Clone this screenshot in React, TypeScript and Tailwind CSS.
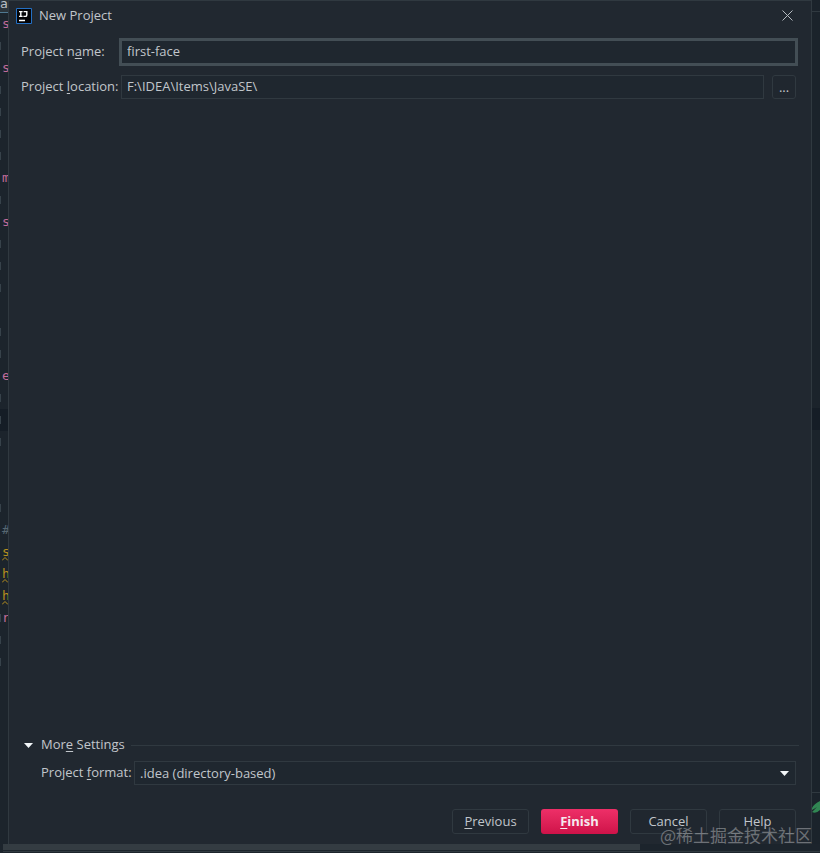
import type { ReactNode } from "react";

type CodeLine = { text: string; tone: string; wavy?: boolean; guide?: boolean };

const blank: CodeLine = { text: "", tone: "", guide: true };
const pink = "text-[#c26c9a]";
const amber = "text-[#b8901f]";

const codeLines: CodeLine[] = [
  { text: "s", tone: pink },
  blank,
  { text: "s", tone: pink },
  blank,
  blank,
  blank,
  blank,
  { text: "m", tone: pink },
  blank,
  { text: "s", tone: pink },
  blank,
  blank,
  blank,
  { text: "", tone: "" },
  blank,
  blank,
  { text: "e", tone: pink },
  blank,
  blank,
  blank,
  { text: "", tone: "" },
  { text: "", tone: "" },
  blank,
  { text: "#", tone: "text-[#566670]" },
  { text: "s", tone: amber, wavy: true },
  { text: "h", tone: amber, wavy: true },
  { text: "h", tone: amber, wavy: true },
  { text: "r", tone: pink, guide: true },
  blank,
  blank,
];

function Key({ children }: { children: ReactNode }) {
  return <span className="underline decoration-1 underline-offset-2">{children}</span>;
}

function Wave() {
  return (
    <svg className="absolute bottom-0.5 left-0.5 h-1 w-1.5" viewBox="0 0 6 4" fill="none" stroke="#b8901f">
      <path d="M0 3.5 3 .5l3 3" />
    </svg>
  );
}

function EditorEdge() {
  return (
    <div aria-hidden="true" className="w-2 shrink-0 overflow-hidden bg-[#1c242c] font-['DejaVu_Sans_Mono',monospace] text-[13px]">
      <div className="h-[13px] border-b border-[#4f7891] bg-[#2b343b] leading-2 text-[#b8bec4]">a</div>
      {codeLines.map((line, i) => (
        <div key={i} className={`relative flex h-[22px] items-center leading-[22px] ${i === 18 ? "bg-[#151d26]" : ""}`}>
          <span className={`mr-px h-2 w-px shrink-0 ${line.guide ? "bg-[#37424a]" : ""}`} />
          <span className={line.tone}>{line.text}</span>
          {line.wavy && <Wave />}
        </div>
      ))}
    </div>
  );
}

function DownArrow({ className = "" }: { className?: string }) {
  return (
    <svg className={`h-[5px] w-[9px] ${className}`} viewBox="0 0 9 5" fill="#f2f6f8" aria-hidden="true">
      <path d="M0 0h9L4.5 5z" />
    </svg>
  );
}

function ProductIcon() {
  return (
    <svg className="size-4" viewBox="0 0 16 16" fill="none" aria-hidden="true">
      <path fill="#050507" stroke="#2470c4" d="M.5.5h15v15H.5z" />
      <path stroke="#fff" strokeWidth="1.4" d="M3 3.6h3.6M3 8.4h3.6M4.8 3.6v4.8M7.6 3.6h3.2v3.3q0 1.5-1.5 1.5H7.4M3 12.5h6" />
    </svg>
  );
}

const plainButton =
  "h-[25px] w-[77px] rounded-[3px] border border-[#303940] bg-[#20272f] pb-0.5 text-center";

export default function App() {
  return (
    <div className="relative flex min-h-screen flex-col overflow-hidden bg-[#1c242c] font-['Open_Sans','Noto_Sans',sans-serif] text-[13px] leading-5 text-[#c1c6cb]">
      <div className="flex flex-1">
        <EditorEdge />
        <main className="flex min-w-0 flex-1 flex-col border border-b-0 border-[#303940] bg-[#212830]">
          <header className="flex h-[29px] items-center pl-[7px] pr-[18px]">
            <ProductIcon />
            <h1 className="ml-[7px] flex-1 pb-0.5">New Project</h1>
            <button type="button" aria-label="Close" className="flex size-3 items-center justify-center">
              <svg className="size-[11px]" viewBox="0 0 11 11" stroke="#b5bbc0" fill="none" aria-hidden="true">
                <path d="m.5.5 10 10m0-10-10 10" />
              </svg>
            </button>
          </header>

          <form className="flex flex-1 flex-col pb-2.5" onSubmit={(e) => e.preventDefault()}>
            <div className="mt-2 flex items-center pl-3 pr-[13px]">
              <label htmlFor="name" className="w-[98px] shrink-0 pb-0.5">
                Project n<Key>a</Key>me:
              </label>
              <input
                id="name"
                defaultValue="first-face"
                className="h-7 min-w-0 flex-1 border-3 border-[#434e55] bg-[#1f272f] px-[5px] pb-0.5 outline-none"
              />
            </div>
            <div className="mt-[9px] flex items-center pl-3 pr-[15px]">
              <label htmlFor="location" className="w-[100px] shrink-0 pb-0.5">
                Project <Key>l</Key>ocation:
              </label>
              <input
                id="location"
                defaultValue={"F:\\IDEA\\Items\\JavaSE\\"}
                className="h-6 min-w-0 flex-1 border border-[#303940] bg-[#1f272f] px-[5px] pb-0.5 outline-none"
              />
              <button type="button" aria-label="Browse" className="ml-2 size-6 rounded-[3px] border border-[#303940] bg-[#20272f] text-center">
                ...
              </button>
            </div>

            <section className="mt-auto">
              <div className="flex items-center pl-[15px] pr-3">
                <button type="button" aria-expanded="true" className="flex h-5 shrink-0 items-center">
                  <DownArrow className="mr-2" />
                  <span className="pb-0.5">
                    Mor<Key>e</Key> Settings
                  </span>
                </button>
                <hr className="ml-1.5 flex-1 border-[#303940]" />
              </div>
              <div className="mt-1.5 flex items-center pl-8 pr-[15px]">
                <label htmlFor="format" className="w-[93px] shrink-0 pb-0.5">
                  Project <Key>f</Key>ormat:
                </label>
                <div className="relative min-w-0 flex-1">
                  <select id="format" className="block h-6 w-full appearance-none border border-[#303940] bg-[#1f272f] px-[5px] outline-none">
                    <option>.idea (directory-based)</option>
                  </select>
                  <DownArrow className="pointer-events-none absolute right-[7px] top-2.5" />
                </div>
              </div>
            </section>

            <footer className="mt-6 flex justify-end gap-3 pr-[15px]">
              <button type="button" className={plainButton}>
                <Key>P</Key>revious
              </button>
              <button
                type="submit"
                className="h-[25px] w-[77px] rounded-[3px] bg-linear-to-b from-[#ee2f68] to-[#cf1249] pb-0.5 text-center font-bold text-[#f5e9ee]"
              >
                <Key>F</Key>inish
              </button>
              <button type="button" className={plainButton}>Cancel</button>
              <button type="button" className={plainButton}>Help</button>
            </footer>
          </form>
        </main>
        <div aria-hidden="true" className="flex w-2 shrink-0 flex-col bg-[#1b232b]">
          <div className="h-3 border-b border-[#303940]" />
          <div className="mt-[396px] h-[22px] bg-[#151d26]" />
          <div className="mt-auto h-[52px] border-t border-[#303940] pt-2">
            <svg className="h-3 w-2" viewBox="0 0 8 12" fill="#318653">
              <path d="M0 7Q2 3 8 0v9Q4 13 0 11L5 6Q2 8 0 9z" />
            </svg>
          </div>
        </div>
      </div>
      <div aria-hidden="true" className="flex h-[9px] flex-col pl-[3px]">
        <div className="h-1.5 w-[78%] bg-[#343c42]" />
        <div className="mt-px border-t border-[#303940]" />
      </div>
      <p className="absolute right-2 bottom-1.5 font-['Noto_Sans_CJK_SC',sans-serif] text-[17px] leading-6 text-white/35">
        @稀土掘金技术社区
      </p>
    </div>
  );
}
